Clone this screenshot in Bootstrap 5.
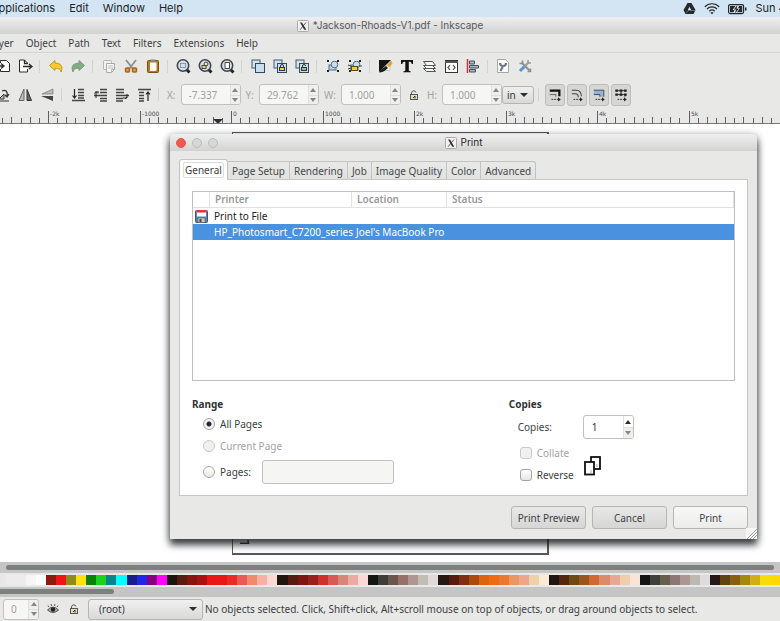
<!DOCTYPE html>
<html lang="en">
<head>
<meta charset="utf-8">
<meta name="viewport" content="width=device-width, initial-scale=1">
<title>Inkscape - Print</title>
<link href="https://cdn.jsdelivr.net/npm/bootstrap@5.3.0/dist/css/bootstrap.min.css" rel="stylesheet">
<style>
  body { font: 10px/16px "Noto Sans", "Open Sans", sans-serif; color: #3b3f42; background: #e8e8e7; min-height: 560px; }
  a { color: inherit; text-decoration: none; }
  svg { display: block; flex: none; }
  .system-bar { height: 17px; background: #d3e5f3; font: 11px/17px Inter, sans-serif; color: #1d2328; }
  .system-menu { gap: 14px; margin-left: -9px; }
  .system-tray { gap: 8px; margin-right: -20px; }
  .title-strip { height: 17px; background: linear-gradient(#efefef, #e2e2e2 45%, #d2d2d2); font: 10px/17px Inter, sans-serif; color: #55585a; }
  .app-menu { height: 18px; line-height: 18px; gap: 12px; margin-left: -12px; }
  .menu-frame { border-bottom: 1px solid #d6d6d5; }
  .tools { gap: 6px; height: 26px; }
  .tools-main { margin-left: -5px; }
  .tool { border: 0; padding: 0; background: none; flex: none; width: 16px; height: 16px; }
  .divide { width: 3px; height: 13px; flex: none; border-left: 1px solid #d3d3d2; }
  .divide-slim { width: 2px; }
  .tools-edit { height: 31px; }
  .transform-tools { gap: 6px; margin-left: -5px; }
  .measure { gap: 5px; color: #a3a4a4; margin-left: 6px; }
  .spin { height: 21px; border: 1px solid #c0c0bf; border-radius: 3px; background: #f6f7f4; overflow: hidden; }
  .spin input { border: 0; background: none; font: inherit; color: #a0a1a1; padding: 0 0 0 7px; min-width: 0; width: 48px; outline: 0; }
  .spin-keys { width: 10px; flex: none; border-left: 1px solid #e0e0de; }
  .spin-keys button { border: 0; padding: 0; background: #efefed; height: 50%; display: flex; align-items: center; justify-content: center; }
  .spin-keys button + button { border-top: 1px solid #dededc; }
  .up, .down { width: 0; height: 0; border: 3px solid transparent; }
  .up { border-top: 0; border-bottom: 4px solid #858685; }
  .down { border-bottom: 0; border-top: 4px solid #858685; }
  .up.dark { border-bottom-color: #2b2f33; }
  .pick { appearance: none; border: 1px solid #b5b5b4; border-radius: 3px; color: #33373a; font: inherit; padding: 0 4px; background: linear-gradient(#f0f0f0, #d9d9d8); }
  .pick-frame { position: relative; }
  .pick-frame .down { position: absolute; right: 6px; top: 50%; margin-top: -2px; border-width: 4px 4px 0; border-top-color: #2b2f33; pointer-events: none; }
  .unit { width: 32px; height: 18px; }
  .toggles { gap: 2px; }
  .toggle { width: 20px; height: 22px; border: 1px solid #bdbdbc; border-radius: 3px; background: #d6d6d5; padding: 2px; }
  .ruler { height: 14px; border-bottom: 1px solid #777; overflow: hidden; }
  .ruler text { font: 6px "DejaVu Sans", sans-serif; fill: #4a4d4f; }
  .workspace { position: relative; background: #fff; min-height: 436px; }
  .sheet { width: 317px; border: 1px solid #555a58; border-width: 1px 2px 2px 1px; margin: 8px auto 7px; position: relative; }
  .sheet-mark { position: absolute; left: 7px; bottom: 9px; }
  .scroll-top, .scroll-low { background: #c5c5c5; height: 11px; padding: 3px 6px; }
  .thumb { height: 5px; border-radius: 3px; background: #7c807f; }
  .scroll-low { height: 10px; padding: 2px 0; }
  .scroll-low .thumb { width: 114px; border-radius: 0 3px 3px 0; }
  .palette { height: 10px; margin: 2px 0 2px 6px; }
  .palette-lead { width: 40px; background: linear-gradient(90deg, #ececec 50%, #f6f6f6 50% 75%, #fff 75%); flex: none; }
  .swatch { flex: 1 1 0; border: 0; padding: 0; }
  .status { height: 24px; }
  .status-opacity { margin-left: 3px; }
  .status-opacity input { width: 24px; }
  .status-tools { gap: 6px; margin: 0 4px 0 7px; }
  .layer { width: 115px; height: 21px; padding-left: 10px; }
  .status-text { white-space: nowrap; padding-left: 2px; }

  .print-window { position: absolute; left: 170px; right: 23px; top: 10px; background: #e8e8e7; border-radius: 4px 4px 0 0; box-shadow: 0 6px 7px rgba(25,30,32,.75), 0 2px 9px rgba(0,0,0,.45); }
  .print-title { height: 17px; border-radius: 4px 4px 0 0; background: linear-gradient(#eeeeee, #e2e2e2 50%, #d2d2d2); font: 10px/17px Inter, sans-serif; color: #26292b; }
  .window-keys { gap: 6px; padding-left: 6px; position: absolute; left: 0; top: 4px; }
  .window-key { width: 10px; height: 10px; border-radius: 50%; border: 1px solid #b9beb8; background: #d6d8d4; padding: 0; }
  .window-key.close-key { background: #f2584f; border-color: #e0574f; }
  .print-body { padding: 8px 9px 10px; }
  .tabs { border: 0; height: 20px; align-items: flex-end; }
  .tabs .nav-link { border: 1px solid #c3c3c1; border-left-width: 0; border-bottom: 0; border-radius: 0; padding: 0 4px; height: 18px; line-height: 18px; color: #44484a; background: linear-gradient(#e9e9e8, #e1e1e0); margin: 0; }
  .tabs .nav-item:last-child .nav-link { border-top-right-radius: 3px; }
  .tabs .nav-link.active { height: 21px; background: #fff; border: 1px solid #c3c3c1; border-bottom: 0; border-radius: 3px 3px 0 0; padding: 2px 3px; margin-bottom: -1px; position: relative; z-index: 1; color: #3b3f42; }
  .tabs .nav-link.active span { display: block; border: 1px solid #dededc; border-radius: 2px; line-height: 14px; padding: 0 1px; }
  .sheet-panel { background: #fff; border: 1px solid #c6c6c4; padding: 11px 12px 9px; }
  .printers { border: 1px solid #bfbfbd; height: 190px; }
  .printers table { table-layout: fixed; width: 100%; color: #1d2022; border-collapse: separate; border-spacing: 0; }
  .printers th { color: #97999a; font-weight: 600; border: 0 solid #e2e2e1; border-width: 0 1px 1px 0; padding: 0 5px; height: 16px; line-height: 15px; }
  .printers td { padding: 0 0 0 4px; height: 16px; line-height: 16px; white-space: nowrap; }
  .printers .mark-cell { padding: 0 0 0 2px; }
  .printers .picked { background: #4a92df; color: #fff; }
  .w-icon { width: 17px; } .w-name { width: 142px; } .w-place { width: 95px; }
  .options { padding-top: 15px; }
  .options h2 { font: bold 10px/16px "Noto Sans", sans-serif; margin: 0 0 1px; color: #303437; }
  .choice { gap: 5px; height: 22px; padding-left: 11px; }
  .choice.faded { color: #a2a3a3; }
  .choice input[type=radio], .choice input[type=checkbox] { appearance: none; width: 12px; height: 12px; margin: 0; border: 1px solid #a4a5a4; border-radius: 50%; background: linear-gradient(#fff, #e6e6e5); flex: none; }
  .choice input[type=checkbox] { border-radius: 3px; }
  .choice.faded input { border-color: #c9c9c8 !important; background: #f0f0ef !important; }
  .choice input[type=radio]:checked { background: radial-gradient(circle, #23282c 0 2px, #f4f4f4 3px); }
  .page-range { height: 24px; margin-top: 3px; }
  .page-range input[type=text] { width: 132px; height: 24px; border: 1px solid #c0c1be; border-radius: 3px; background: #f5f6f3; margin-left: 6px; }
  .copies-row { padding: 2px 0 3px 9px; }
  .copies-row label { width: 65px; }
  .copies { width: 51px; height: 24px; background: #fff; }
  .copies input { color: #2d3134; padding-left: 8px; }
  .copies .spin-keys button:first-child { background: #fff; }
  .collate-art { margin: 4px 0 0 10px; }
  .actions { gap: 6px; margin-top: 10px; }
  .actions .btn { width: 75px; height: 23px; padding: 0; font: inherit; border: 1px solid #b6b7b5; border-radius: 3px; color: #3f4345; background: linear-gradient(#e8e8e8, #d6d6d5); }
  .actions .btn.main-action { background: linear-gradient(#f8f8f8, #ececeb); }
  .grip { position: absolute; right: 0; bottom: 0; background: #f7f7f6; }
</style>
<script src="https://cdn.jsdelivr.net/npm/bootstrap@5.3.0/dist/js/bootstrap.bundle.min.js"></script>
</head>
<body class="vh-100 d-flex flex-column overflow-hidden">

<svg width="0" height="0" class="position-absolute" aria-hidden="true">
  <defs>
    <symbol id="lens" viewBox="0 0 16 16"><path d="M11.5 11.5l3 3" stroke="#222" stroke-width="3"/><circle cx="8" cy="7.500" r="5.700" fill="#d7e2ee" stroke="#3f4549" stroke-width="1.600"/></symbol>
    <symbol id="squares" viewBox="0 0 16 16"><rect x="2" y="2" width="8" height="8" fill="#d2e2ef" stroke="#42596b"/><rect x="5.500" y="5.500" width="9" height="9" fill="#c9dfef" stroke="#33495a"/></symbol>
    <symbol id="shapes" viewBox="0 0 16 16"><path d="M2 2h2v2H2zM12 2h2v2h-2zM2 12h2v2H2zM12 12h2v2h-2z" fill="#222"/><rect x="4" y="7" width="7" height="5" fill="#bdd3e6" stroke="#4b6a85"/><circle cx="9.500" cy="6.500" r="3.300" fill="#cbdcea" stroke="#4b6a85"/></symbol>
    <symbol id="xlogo" viewBox="0 0 12 12"><rect x=".5" y=".5" width="11" height="11" rx="1" fill="#f1f1f0" stroke="#a9aaa9"/><path d="M3 2.500h2L9.300 9.800H7.200z" fill="#333"/><path d="M9 2.500L3 9.800" stroke="#333" stroke-width=".8"/></symbol>
    <symbol id="padlock" viewBox="0 0 12 12"><path d="M3.500 6V4a2.300 2.300 0 0 1 4.500-.5" fill="none" stroke="#555"/><rect x="2.500" y="5.500" width="7" height="5" fill="#e6ddb5" stroke="#555"/><path d="M5 9l2-2M7 9.500V7" stroke="#333"/></symbol>
    <symbol id="goto" viewBox="0 0 16 16"><path d="M4 13h2M7 13h2M10 13h2" stroke="#222"/><path d="M11.500 10.500l3 2.500-3 2.500z" fill="#222"/></symbol>
    <symbol id="scale-stroke" viewBox="0 0 16 16"><use href="#goto"/><path d="M2 3h11v6.500" fill="none" stroke="#111" stroke-width="2.500"/><path d="M2 7.500h7v2.500" fill="none" stroke="#555"/></symbol>
    <symbol id="scale-corner" viewBox="0 0 16 16"><use href="#goto"/><path d="M2 2.500h5q6 0 6 7M2 6.500h4q3.500 0 3.500 4" fill="none" stroke="#444" stroke-width="1.200"/></symbol>
    <symbol id="move-gradient" viewBox="0 0 16 16"><use href="#goto"/><path d="M2 5h9v5" fill="none" stroke="#8fb3e0" stroke-width="3.500"/><path d="M2 2.500h11.500V10M2 7.500h7v2.500" fill="none" stroke="#333"/></symbol>
    <symbol id="move-pattern" viewBox="0 0 16 16"><use href="#goto"/><path d="M1.500 3h13M1.500 7.500h13" stroke="#222" stroke-width="2.500" stroke-dasharray="3 2"/><path d="M2 3h12M2 7.500h12M8 2v7M12.500 7v3" stroke="#222"/></symbol>
  </defs>
</svg>

<header class="system-bar d-flex justify-content-between overflow-hidden flex-shrink-0">
  <nav class="system-menu d-flex"><a href="#">Applications</a><a href="#">Edit</a><a href="#">Window</a><a href="#">Help</a></nav>
  <div class="system-tray d-flex align-items-center">
    <svg width="13" height="13" viewBox="0 0 13 13"><path d="M4.500 1h4L12.500 8l-2 4h-8l-2-4z" fill="#25292d"/><path d="M6.500 4.800L4.800 8h3.400z" fill="#d3e5f3"/><path d="M3.200 11L5 8.500h7" fill="none" stroke="#8d99a3" stroke-width=".6"/></svg>
    <svg width="16" height="13" viewBox="0 0 16 13"><path d="M.8 4.800a10 10 0 0 1 14.400 0M3 7a7 7 0 0 1 10 0M5.300 9.200a4 4 0 0 1 5.400 0" fill="none" stroke="#25292d" stroke-width="1.200"/><path d="M6.500 10.800a2.200 2.200 0 0 1 3 0L8 12.300z" fill="#25292d"/></svg>
    <svg width="19" height="12" viewBox="0 0 19 12"><rect x=".6" y="1.600" width="15" height="9" rx="1.500" fill="none" stroke="#25292d" stroke-width="1.200"/><path d="M2 3h5.500L4.500 7h2l-1 2.300H2zM14.200 9.300H9L12 5.200h-2L11 3h3.200zM17 4.500h1.500v3H17z" fill="#25292d"/><path d="M9.300 2L6 6.500h2L7 10.500 10.800 5.700H8.600z" fill="#25292d"/></svg>
    <span>Sun 4:12</span>
  </div>
</header>

<div class="title-strip d-flex justify-content-center align-items-center flex-shrink-0 gap-1">
  <svg width="12" height="12"><use href="#xlogo"/></svg><span>*Jackson-Rhoads-V1.pdf - Inkscape</span>
</div>

<div class="menu-frame overflow-hidden flex-shrink-0">
  <nav class="app-menu d-flex"><a href="#">Layer</a><a href="#">Object</a><a href="#">Path</a><a href="#">Text</a><a href="#">Filters</a><a href="#">Extensions</a><a href="#">Help</a></nav>
</div>

<div class="overflow-hidden flex-shrink-0">
<div class="tools tools-main d-flex align-items-center" role="toolbar" aria-label="Commands">
  <button class="tool" aria-label="Import"><svg width="16" height="16" viewBox="0 0 16 16"><path d="M5.500 5V2.500h6l3 3v8h-9V11" fill="#fff" stroke="#2b2b2b"/><path d="M1 8h7M6 5.500L9 8l-3 2.500" fill="none" stroke="#2b2b2b" stroke-width="1.300"/></svg></button>
  <button class="tool" aria-label="Export"><svg width="16" height="16" viewBox="0 0 16 16"><path d="M10.500 6V5l-3-3h-5v12h8v-3" fill="#fff" stroke="#2b2b2b"/><path d="M7.500 2v3.500h3M6 8.500h8M12 6l3 2.500-3 2.500" fill="none" stroke="#2b2b2b" stroke-width="1.300"/></svg></button>
  <i class="divide"></i>
  <button class="tool" aria-label="Undo"><svg width="16" height="16" viewBox="0 0 16 16"><path d="M1.500 7.500L7 2.500v2.700c5.500-.2 8.500 3 6 8.800-.3-2.500-2-3.700-6-3.700v2.200z" fill="#f5cb2e" stroke="#c4981a"/></svg></button>
  <button class="tool" aria-label="Redo"><svg width="16" height="16" viewBox="0 0 16 16"><path d="M14.500 7.500L9 2.500v2.700c-5.500-.2-8.500 3-6 8.800.3-2.500 2-3.700 6-3.700v2.200z" fill="#84aa83" stroke="#789b77"/></svg></button>
  <i class="divide"></i>
  <button class="tool" aria-label="Copy"><svg width="16" height="16" viewBox="0 0 16 16"><rect x="2.500" y="2.500" width="8" height="9" rx="1" fill="#f2f2f2" stroke="#b4b4b4"/><path d="M5.500 5.500h8v6l-3 3h-5z" fill="#f8f8f8" stroke="#a9a9a9"/><path d="M7 8h5M7 10h5M10.500 14v-2.500h3" stroke="#bbb" fill="none"/></svg></button>
  <button class="tool" aria-label="Cut"><svg width="16" height="16" viewBox="0 0 16 16"><path d="M3 2l7 9M13 2l-7 9" stroke="#8b8f91" stroke-width="1.800"/><rect x="2.500" y="10" width="4" height="4" rx="1" fill="#d9a05a" stroke="#a8631b" stroke-width="1.500"/><rect x="9.500" y="10" width="4" height="4" rx="1" fill="#d9a05a" stroke="#a8631b" stroke-width="1.500"/></svg></button>
  <button class="tool" aria-label="Paste"><svg width="16" height="16" viewBox="0 0 16 16"><rect x="2.500" y="2.500" width="11" height="12" rx="1" fill="#b77b1c" stroke="#7a500d"/><path d="M5 4.500h6.500V12l-1 1H5z" fill="#fafafa"/><rect x="5.500" y="1.500" width="5" height="2.500" fill="#888"/></svg></button>
  <i class="divide divide-slim"></i>
  <button class="tool" aria-label="Zoom selection"><svg width="16" height="16"><use href="#lens"/><path d="M5.500 5.500h5v4h-5z" fill="none" stroke="#3e4e5c" stroke-dasharray="1 1"/></svg></button>
  <button class="tool" aria-label="Zoom drawing"><svg width="16" height="16"><use href="#lens"/><circle cx="9" cy="6" r="2" fill="#f0e3a8" stroke="#444"/><rect x="5" y="7.500" width="4" height="3" fill="#eed271" stroke="#444"/></svg></button>
  <button class="tool" aria-label="Zoom page"><svg width="16" height="16"><use href="#lens"/><path d="M6 4.500h4.500v6H6z" fill="#fff" stroke="#444"/></svg></button>
  <i class="divide"></i>
  <button class="tool" aria-label="Duplicate"><svg width="16" height="16"><use href="#squares"/></svg></button>
  <button class="tool" aria-label="Clone"><svg width="16" height="16"><use href="#squares"/><path d="M8.500 9V8a1.500 1.500 0 0 1 3 0v1" fill="none" stroke="#333"/><rect x="7.500" y="9.500" width="5" height="3" fill="#f4cf4c" stroke="#333"/></svg></button>
  <button class="tool" aria-label="Unlink clone"><svg width="16" height="16"><use href="#squares"/><path d="M8.500 9V8a1.500 1.500 0 0 1 3 0" fill="none" stroke="#333"/><rect x="7.500" y="9.500" width="5" height="3" fill="#94c578" stroke="#333"/></svg></button>
  <i class="divide"></i>
  <button class="tool" aria-label="Group"><svg width="16" height="16"><use href="#shapes"/></svg></button>
  <button class="tool" aria-label="Ungroup"><svg width="16" height="16"><use href="#shapes"/><path d="M1 7l3 1M1 11l3-1M15 8h-3" stroke="#333"/><rect x="4.500" y="8.500" width="6" height="4" fill="#f1cd35" stroke="#5a4c10"/></svg></button>
  <i class="divide divide-slim"></i>
  <button class="tool" aria-label="Fill and stroke"><svg width="16" height="16" viewBox="0 0 16 16"><path d="M2 2h12L2 14z" fill="#151515"/><path d="M13 4v8.500H5z" fill="#fff" stroke="#999" stroke-width=".5"/><path d="M2 14.500c1-3 4-4 7-6.500l2 2c-3 3-6 4.500-9 4.500z" fill="#1b1b1b"/><path d="M10 7.500l4-5 1.500 3L12 9.500z" fill="#e3a432"/></svg></button>
  <button class="tool" aria-label="Text"><svg width="16" height="16" viewBox="0 0 16 16"><path d="M2 2h12v4h-1.200c-.3-1.700-1-2.200-3-2.200V12c0 1 .4 1.400 2 1.400v.9H4.300v-.9c1.500 0 2-.4 2-1.400V3.800c-2 0-2.700.5-3 2.200H2z" fill="#111"/></svg></button>
  <button class="tool" aria-label="Layers"><svg width="16" height="16" viewBox="0 0 16 16"><g fill="#f5f5f4" stroke="#505455"><path d="M2.500 10.500h9l3 3h-9z"/><path d="M2.500 7.500h9l3 3h-9z"/><path d="M2.500 3.500h9l3 4h-9z"/></g></svg></button>
  <button class="tool" aria-label="XML editor"><svg width="16" height="16" viewBox="0 0 16 16"><rect x="2.500" y="2.500" width="12" height="12" fill="#fff" stroke="#333"/><path d="M2 4h13" stroke="#555" stroke-width="2"/><path d="M7 7L5 9.500 7 12M10 7l2 2.500-2 2.500" fill="none" stroke="#444" stroke-width="1.200"/></svg></button>
  <button class="tool" aria-label="Align"><svg width="16" height="16" viewBox="0 0 16 16"><path d="M2.500 1v14" stroke="#e12a2a" stroke-width="1.500"/><path d="M4.500 3h5v3h-5zM4.500 7.500h9v2.500h-9zM4.500 11.500h6v2.500h-6z" fill="#9fb7cb" stroke="#47545f"/></svg></button>
  <i class="divide divide-slim"></i>
  <button class="tool" aria-label="Preferences"><svg width="16" height="16" viewBox="0 0 16 16"><path d="M2.500 1.500h8l3 3v10h-11z" fill="#fafafa" stroke="#a5a5a5"/><path d="M5 5c0 2 1 3 3 3s3-1 3-3M8 8l-2.500 5" fill="none" stroke="#6e7a85" stroke-width="2.200"/></svg></button>
  <button class="tool" aria-label="Document properties"><svg width="16" height="16" viewBox="0 0 16 16"><path d="M4.500 4.500l8 8" stroke="#8b8f92" stroke-width="2"/><path d="M2.500 5.500h3v-3M10.500 13.500h3v-3" fill="none" stroke="#8b8f92" stroke-width="1.600"/><path d="M12 4L8 8" stroke="#9a9ea0" stroke-width="2.200"/><path d="M11 2v3h3" fill="none" stroke="#9a9ea0" stroke-width="1.600"/><path d="M7.500 8.500L3 13" stroke="#5b95cf" stroke-width="3"/></svg></button>
</div>

<div class="tools-edit d-flex align-items-center" role="toolbar" aria-label="Selector controls">
  <div class="transform-tools d-flex align-items-center">
    <button class="tool" aria-label="Rotate"><svg width="16" height="16" viewBox="0 0 16 16"><path d="M7 4c4-2 6 1 5 5M14 7l-2 3-2-2" fill="none" stroke="#333" stroke-width="1.300"/><path d="M4 12l5-5v5z" fill="#bbb" stroke="#333"/><path d="M4 14h10" stroke="#333"/></svg></button>
    <button class="tool" aria-label="Flip horizontal"><svg width="16" height="16" viewBox="0 0 16 16"><path d="M7 2v11.500H2z" fill="#bbb" stroke="#666"/><path d="M10 2.500l4.500 11H10z" fill="#666" stroke="#333"/></svg></button>
    <button class="tool" aria-label="Flip vertical"><svg width="16" height="16" viewBox="0 0 16 16"><path d="M14 2v5H3z" fill="#bbb" stroke="#777" stroke-width=".7"/><path d="M2 9h12v5z" fill="#444"/></svg></button>
    <i class="divide"></i>
    <button class="tool" aria-label="Lower to bottom"><svg width="16" height="16" viewBox="0 0 16 16"><path d="M8 2.500h6M8 5.500h6M8 8.500h6M2 13.500h13M8 11h6" stroke="#444" stroke-width="1.600"/><path d="M4.500 2v8M2.500 8.500l2 2.500 2-2.500" fill="none" stroke="#222" stroke-width="1.200"/></svg></button>
    <button class="tool" aria-label="Lower"><svg width="16" height="16" viewBox="0 0 16 16"><path d="M8 2.500h7M8 5.500h7M2 8.500h13M8 11.500h7M8 14h7" stroke="#444" stroke-width="1.600"/><path d="M4 11V5h3M2.500 6.500L4 4.500l2 2" fill="none" stroke="#222"/></svg></button>
    <button class="tool" aria-label="Raise"><svg width="16" height="16" viewBox="0 0 16 16"><path d="M2 2.500h8M2 5.500h8M2 8.500h13M2 11.500h7M2 14h7" stroke="#444" stroke-width="1.600"/><path d="M9 11h4V7M11 12l2-2" fill="none" stroke="#222"/></svg></button>
    <button class="tool" aria-label="Raise to top"><svg width="16" height="16" viewBox="0 0 16 16"><path d="M2 2.500h13M3 5.500h5M3 8.500h5M3 11.500h5M3 14h5" stroke="#444" stroke-width="1.600"/><path d="M12 14V5M10 7.500L12 5l2 2.500" fill="none" stroke="#222" stroke-width="1.200"/></svg></button>
    <i class="divide"></i>
  </div>
  <div class="measure d-flex align-items-center">
    <label for="mx">X:</label>
    <div class="spin d-flex"><input id="mx" value="-7.337"><div class="spin-keys"><button class="w-100" aria-label="More"><i class="up"></i></button><button class="w-100" aria-label="Less"><i class="down"></i></button></div></div>
    <label for="my">Y:</label>
    <div class="spin d-flex"><input id="my" value="29.762"><div class="spin-keys"><button class="w-100" aria-label="More"><i class="up"></i></button><button class="w-100" aria-label="Less"><i class="down"></i></button></div></div>
    <label for="mw">W:</label>
    <div class="spin d-flex"><input id="mw" value="1.000"><div class="spin-keys"><button class="w-100" aria-label="More"><i class="up"></i></button><button class="w-100" aria-label="Less"><i class="down"></i></button></div></div>
    <button class="tool" aria-label="Lock ratio"><svg class="mx-auto" width="12" height="12"><use href="#padlock"/></svg></button>
    <label for="mh">H:</label>
    <div class="spin d-flex"><input id="mh" value="1.000"><div class="spin-keys"><button class="w-100" aria-label="More"><i class="up"></i></button><button class="w-100" aria-label="Less"><i class="down"></i></button></div></div>
  </div>
  <div class="pick-frame me-1"><select class="pick unit d-block" aria-label="Unit"><option>in</option></select><i class="down"></i></div>
  <i class="divide me-1"></i>
  <div class="toggles d-flex">
    <button class="toggle" aria-label="Scale stroke"><svg width="14" height="14"><use href="#scale-stroke"/></svg></button>
    <button class="toggle" aria-label="Scale corners"><svg width="14" height="14"><use href="#scale-corner"/></svg></button>
    <button class="toggle" aria-label="Move gradients"><svg width="14" height="14"><use href="#move-gradient"/></svg></button>
    <button class="toggle" aria-label="Move patterns"><svg width="14" height="14"><use href="#move-pattern"/></svg></button>
  </div>
</div>
</div>

<div class="ruler flex-shrink-0"><svg id="ruler" width="100%" height="14"></svg></div>

<main class="workspace flex-grow-1 d-flex">
  <div class="sheet align-self-stretch"><svg class="sheet-mark" width="10" height="4" viewBox="0 0 10 4"><path d="M0 3h8V0l1 4H0z" fill="#333" stroke="#333"/></svg></div>

  <section class="print-window" role="dialog" aria-labelledby="print-name">
    <div class="print-title d-flex justify-content-center align-items-center gap-1">
      <div class="window-keys d-flex"><button class="window-key close-key" aria-label="Close"></button><button class="window-key" aria-label="Minimise"></button><button class="window-key" aria-label="Zoom"></button></div>
      <svg width="12" height="12"><use href="#xlogo"/></svg><span id="print-name">Print</span>
    </div>
    <div class="print-body">
      <ul class="nav nav-tabs tabs flex-nowrap" role="tablist">
        <li class="nav-item"><button class="nav-link active" role="tab"><span>General</span></button></li>
        <li class="nav-item"><button class="nav-link" role="tab">Page Setup</button></li>
        <li class="nav-item"><button class="nav-link" role="tab">Rendering</button></li>
        <li class="nav-item"><button class="nav-link" role="tab">Job</button></li>
        <li class="nav-item"><button class="nav-link" role="tab">Image Quality</button></li>
        <li class="nav-item"><button class="nav-link" role="tab">Color</button></li>
        <li class="nav-item"><button class="nav-link" role="tab">Advanced</button></li>
      </ul>
      <div class="sheet-panel">
        <div class="printers">
          <table>
            <colgroup><col class="w-icon"><col class="w-name"><col class="w-place"><col></colgroup>
            <thead><tr><th></th><th>Printer</th><th>Location</th><th>Status</th></tr></thead>
            <tbody>
              <tr><td class="mark-cell"><svg width="13" height="13" viewBox="0 0 13 13"><rect x=".5" y=".5" width="12" height="12" rx="1" fill="#5c86b4" stroke="#3b5775"/><path d="M2 1h9v5.500H2z" fill="#fff"/><path d="M2 0h9v2.500H2z" fill="#e33"/><path d="M3 8h7v4.500H3z" fill="#c9ccce" stroke="#555" stroke-width=".6"/><path d="M4.500 9h2v3h-2z" fill="#444"/></svg></td><td>Print to File</td><td></td><td></td></tr>
              <tr class="picked"><td></td><td>HP_Photosmart_C7200_series</td><td>Joel's MacBook Pro</td><td></td></tr>
            </tbody>
          </table>
        </div>
        <div class="row g-0 options">
          <div class="col-7">
            <h2>Range</h2>
            <div class="choice d-flex align-items-center"><input type="radio" name="range" id="all" checked><label for="all">All Pages</label></div>
            <div class="choice faded d-flex align-items-center"><input type="radio" name="range" id="current" disabled><label for="current">Current Page</label></div>
            <div class="choice page-range d-flex align-items-center"><input type="radio" name="range" id="some"><label for="some">Pages:</label><input type="text" aria-label="Page numbers"></div>
          </div>
          <div class="col-5">
            <h2>Copies</h2>
            <div class="copies-row d-flex align-items-center"><label for="count">Copies:</label>
              <div class="spin copies d-flex"><input id="count" value="1"><div class="spin-keys"><button class="w-100" aria-label="More"><i class="up dark"></i></button><button class="w-100" aria-label="Less"><i class="down"></i></button></div></div></div>
            <div class="d-flex align-items-center">
              <div>
                <div class="choice faded d-flex align-items-center"><input type="checkbox" id="collate" disabled><label for="collate">Collate</label></div>
                <div class="choice d-flex align-items-center"><input type="checkbox" id="reverse"><label for="reverse">Reverse</label></div>
              </div>
              <svg class="collate-art" width="17" height="20" viewBox="0 0 17 20"><rect x="7" y="1" width="9" height="12" fill="#fff" stroke="#111" stroke-width="1.800"/><rect x="1" y="6" width="9" height="12.500" fill="#fff" stroke="#111" stroke-width="1.800"/><path d="M7 14v3M13 8v3" stroke="#aaa"/></svg>
            </div>
          </div>
        </div>
      </div>
      <div class="actions d-flex justify-content-end"><button class="btn">Print Preview</button><button class="btn">Cancel</button><button class="btn main-action">Print</button></div>
    </div>
    <svg class="grip" width="11" height="11" viewBox="0 0 11 11"><path d="M1 11L11 1M4 11l7-7M7 11l4-4" stroke="#9b9c9b"/></svg>
  </section>
</main>

<div class="scroll-top flex-shrink-0"><div class="thumb"></div></div>
<div class="palette d-flex flex-shrink-0" id="palette"><span class="palette-lead"></span></div>
<div class="scroll-low flex-shrink-0"><div class="thumb"></div></div>

<footer class="status d-flex align-items-center flex-shrink-0 overflow-hidden">
  <div class="spin status-opacity d-flex"><input aria-label="Opacity" value="0"><div class="spin-keys"><button class="w-100" aria-label="More"><i class="up"></i></button><button class="w-100" aria-label="Less"><i class="down"></i></button></div></div>
  <div class="status-tools d-flex">
    <button class="tool" aria-label="Toggle layer visibility"><svg width="14" height="14" viewBox="0 0 14 14"><path d="M1.500 8q5.500-6 11 0-5.500 5-11 0z" fill="#aaa" stroke="#555"/><circle cx="7" cy="7.500" r="2.200" fill="#222"/><path d="M3 5L2 3.500M5.500 4L5 2M8.500 4L9 2M11 5l1-1.500" stroke="#555"/></svg></button>
    <button class="tool" aria-label="Lock layer"><svg width="12" height="12"><use href="#padlock"/></svg></button>
  </div>
  <div class="pick-frame"><select class="pick layer d-block" aria-label="Layer"><option>(root)</option></select><i class="down"></i></div>
  <span class="status-text">No objects selected. Click, Shift+click, Alt+scroll mouse on top of objects, or drag around objects to select.</span>
</footer>

<script>
  const colors = ("8b1a10 f01414 8f8a1e ffe010 0a8208 1cd21c 0a8488 00ffff 1c1e88 2026e8 84007e ff00f8 " +
    "1c1410 561c10 88140e aa1010 ea1616 e81818 ea2a24 ea5a58 f08a6a f8b0a4 fcd8d4 " +
    "201610 561c10 7e1610 98201e d0302a d85a58 d68878 ecaaa4 fad8d6 " +
    "141616 403c38 6c5450 98706a b09690 c0beb4 dedad8 " +
    "281814 561c10 803010 aa4c10 dc6410 f06a14 ea7830 ea9660 eca68c eed0aa faead6 " +
    "201614 542610 6e4a14 98561c d06830 dc8a6a e8a694 eecead f8e4da " +
    "121416 40423a 685e50 907672 ac9694 bcbab0 dcdcdc " +
    "281816 5e4410 8a5e10 a08a10 d4ac18 f8dc08 ffd800").split(" ");
  const palette = document.getElementById("palette");
  for (const c of colors) {
    const b = document.createElement("button");
    b.className = "swatch";
    b.setAttribute("aria-label", "#" + c);
    b.style.background = "#" + c;
    palette.append(b);
  }

  const origin = 231, step = 91.5;
  let marks = "";
  for (let i = -26; i < 200; i++) {
    const x = Math.round(origin + i * step / 10) + 0.5;
    const top = i % 10 === 0 ? 1 : i % 2 === 0 ? 7 : 8;
    marks += `<path d="M${x} ${top}V14" stroke="#5c6062"/>`;
  }
  for (let k = -2; k < 20; k++) {
    const name = k === 0 ? "0" : Math.abs(k) === 1 ? k * 1000 : k + "k";
    marks += `<text x="${Math.round(origin + k * step) + 2}" y="6">${name}</text>`;
  }
  marks += '<path d="M213 9h10l-5 5z" fill="#2c3033"/>';
  document.getElementById("ruler").innerHTML = marks;
</script>
</body>
</html>
